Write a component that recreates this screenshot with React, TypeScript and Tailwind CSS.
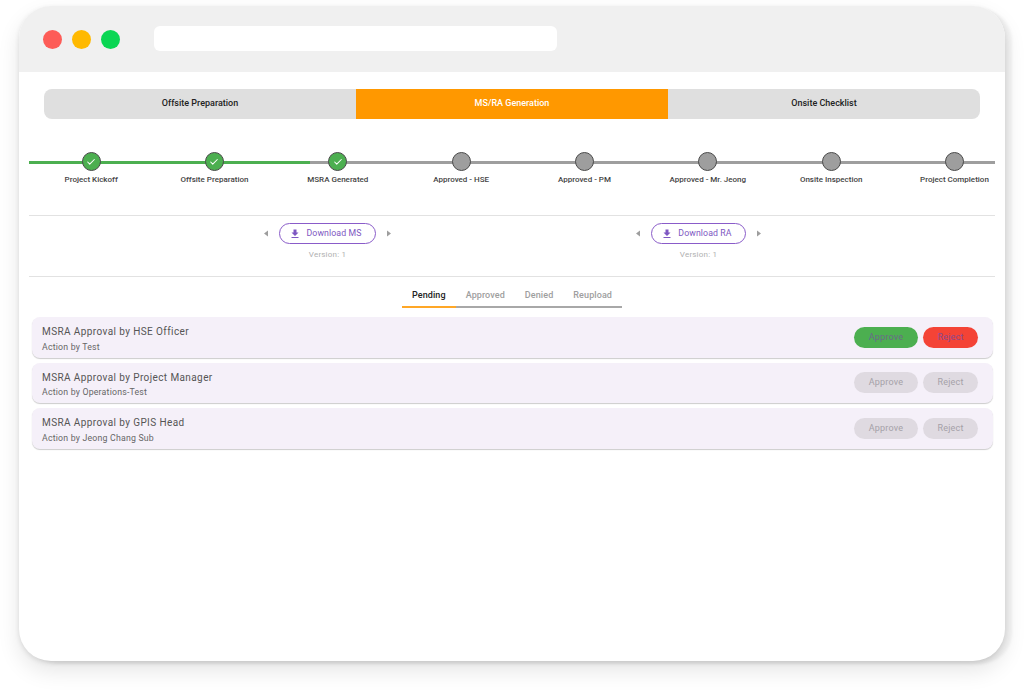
import { Check } from "lucide-react"

const steps = [
  { label: "Project Kickoff", done: true },
  { label: "Offsite Preparation", done: true },
  { label: "MSRA Generated", done: true },
  { label: "Approved - HSE", done: false },
  { label: "Approved - PM", done: false },
  { label: "Approved - Mr. Jeong", done: false },
  { label: "Onsite Inspection", done: false },
  { label: "Project Completion", done: false },
]

const approvals = [
  { title: "MSRA Approval by HSE Officer", by: "Action by Test", active: true },
  { title: "MSRA Approval by Project Manager", by: "Action by Operations-Test", active: false },
  { title: "MSRA Approval by GPIS Head", by: "Action by Jeong Chang Sub", active: false },
]

function Caret({ right }: { right?: boolean }) {
  return (
    <svg width="6" height="7" viewBox="0 0 6 7" className="shrink-0">
      <path d={right ? "M1 0.5 L5 3.5 L1 6.5 Z" : "M5 0.5 L1 3.5 L5 6.5 Z"} fill="#9e9e9e" />
    </svg>
  )
}

function DownloadBlock({ label, width }: { label: string; width: string }) {
  return (
    <div className="flex flex-col items-center">
      <div className="flex items-center gap-[10px]">
        <Caret />
        <button className={`flex h-[21px] items-center justify-center gap-[5px] rounded-full border border-[#8a5cc9] pr-[4px] text-[8.75px] tracking-[0.1px] text-[#7e57c2] ${width}`}>
          <svg width="12" height="12" viewBox="0 0 24 24" fill="#7e57c2">
            <path d="M19 9h-4V3H9v6H5l7 7 7-7zM5 18v2h14v-2H5z" />
          </svg>
          {label}
        </button>
        <Caret right />
      </div>
      <div className="mt-[6px] text-[8px] leading-[10px] tracking-[0.2px] text-[#b0b0b0]">Version: 1</div>
    </div>
  )
}

export default function App() {
  return (
    <div className="h-[693px] w-[1024px] overflow-hidden bg-white pl-[19px] pt-[6px] font-['Roboto',sans-serif]">
      <div className="h-[655px] w-[986px] overflow-hidden rounded-[32px] bg-white shadow-[7px_3px_3px_rgba(0,0,0,0.05),0_10px_22px_rgba(0,0,0,0.1),0_2px_5px_rgba(0,0,0,0.1)]">
        <div className="flex h-[66px] items-center bg-[#f0f0f0] pl-[24px]">
          <span className="h-[19px] w-[19px] rounded-full bg-[#fd5c57]" />
          <span className="ml-[10px] h-[19px] w-[19px] rounded-full bg-[#ffb900]" />
          <span className="ml-[10px] h-[19px] w-[19px] rounded-full bg-[#0ad653]" />
          <div className="mb-[1px] ml-[34px] h-[25px] w-[403px] rounded-[6px] bg-white" />
        </div>

        <div className="mx-[25px] mt-[17px] flex h-[30px] w-[936px] overflow-hidden rounded-[8px] bg-[#dfdfdf] text-[9px] font-medium text-[#222]">
          <div className="flex w-[312px] items-center justify-center">Offsite Preparation</div>
          <div className="flex w-[312px] items-center justify-center bg-[#ff9800] text-white">MS/RA Generation</div>
          <div className="flex w-[312px] items-center justify-center">Onsite Checklist</div>
        </div>

        <div className="relative mx-[10px] mt-[32px] h-[65px] border-b border-[#e2e2e2]">
          <div className="absolute left-0 right-0 top-[10px] h-[3px] bg-[#9e9e9e]" />
          <div className="absolute left-0 top-[10px] h-[3px] w-[281px] bg-[#4caf50]" />
          <div className="relative ml-[0.5px] grid w-[986.67px] grid-cols-8 pt-[1px]">
            {steps.map((s) => (
              <div key={s.label} className="flex flex-col items-center">
                <div className={`flex h-[19px] w-[19px] items-center justify-center rounded-full border border-[#4a4a4a] ${s.done ? "bg-[#4caf50]" : "bg-[#9e9e9e]"}`}>
                  {s.done && <Check size={10} color="white" strokeWidth={2.5} />}
                </div>
                <div className="mt-[4px] whitespace-nowrap text-[8px] font-medium leading-[10px] text-[#444]">{s.label}</div>
              </div>
            ))}
          </div>
        </div>

        <div className="mx-[10px] flex h-[61px] border-b border-[#e2e2e2] pl-[234px] pt-[7px]">
          <DownloadBlock label="Download MS" width="w-[97px]" />
          <div className="ml-[243px]">
            <DownloadBlock label="Download RA" width="w-[95px]" />
          </div>
        </div>

        <div className="mt-[8px] flex justify-center">
          <div className="flex h-[23px] border-b-2 border-[#a8a8a8] text-[9px] font-medium tracking-[0.1px] text-[#9e9e9e]">
            <div className="-mb-[2px] flex items-center border-b-2 border-[#ffa726] px-[10px] text-[#222]">Pending</div>
            <div className="flex items-center px-[10px]">Approved</div>
            <div className="flex items-center px-[10px]">Denied</div>
            <div className="flex items-center px-[10px]">Reupload</div>
          </div>
        </div>

        <div className="mx-[13px] mt-[9px] flex w-[961px] flex-col gap-[5px]">
          {approvals.map((a) => (
            <div key={a.title} className="flex h-[40.5px] items-center justify-between rounded-[8px] bg-[#f5f0f9] pl-[10px] pr-[15px] shadow-[0_1px_1px_rgba(0,0,0,0.2)]">
              <div className="pt-[3px]">
                <div className="text-[10px] leading-[14px] tracking-[0.4px] text-[#555]">{a.title}</div>
                <div className="mt-[2.5px] text-[8.75px] leading-[11px] tracking-[0.2px] text-[#666]">{a.by}</div>
              </div>
              <div className="flex gap-[5px] text-[9px] tracking-[0.2px]">
                <button className={`h-[21px] w-[64px] rounded-full ${a.active ? "bg-[#4caf50] text-[#6a6a8a]" : "bg-[#dfdae1] text-[#a5a1a8]"}`}>Approve</button>
                <button className={`h-[21px] w-[55px] rounded-full ${a.active ? "bg-[#f44336] text-[#8a4a90]" : "bg-[#dfdae1] text-[#a5a1a8]"}`}>Reject</button>
              </div>
            </div>
          ))}
        </div>
      </div>
    </div>
  )
}
